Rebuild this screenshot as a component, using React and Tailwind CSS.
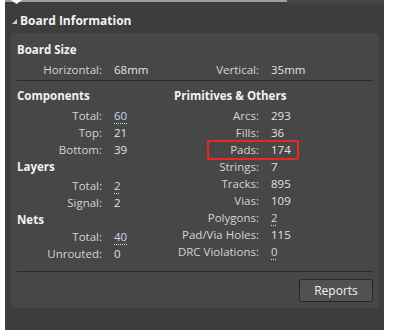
import React from 'react'

const font = { fontFamily: '"Open Sans", "Noto Sans", sans-serif' }

function Row({ label, value, link, children }) {
	return (
		<div className="relative flex h-[17px] items-center">
			<span className="w-[85px] shrink-0 text-right text-[#d4d4d4]">{label}</span>
			<span
				className={
					link
						? 'ml-[12px] text-[#cbd6e8] underline decoration-dotted decoration-[#cbd6e8] underline-offset-[3px]'
						: 'ml-[12px] text-[#e2e2e2]'
				}
			>
				{value}
			</span>
			{children}
		</div>
	)
}

function Heading({ children, className = '' }) {
	return <div className={'flex h-[17px] items-center font-bold text-[#f2f2f2] ' + className}>{children}</div>
}

export default function App() {
	return (
		<div className="flex h-[330px] w-[402px] overflow-hidden bg-white text-[11.5px] leading-none" style={font}>
			<div className="relative ml-[5px] flex h-full w-[379px] flex-col bg-[#3d3d3d]">
				{/* top strip */}
				<div className="flex h-[4px]">
					<div className="h-[2px] w-[282px] bg-[#9d9d9d]"></div>
					<div className="h-[4px] flex-1 bg-[#444444]"></div>
				</div>
				<svg className="absolute left-[6px] top-0" width="11" height="4" viewBox="0 0 11 4">
					<polygon points="0,0 11,0 5.5,4" fill="#ffffff" />
				</svg>

				{/* header */}
				<div className="flex h-[29px] items-center pl-[7px] pt-[5px]">
					<svg width="5" height="5" viewBox="0 0 5 5" className="mr-[3px] mt-[1px]">
						<polygon points="5,0 5,5 0,5" fill="#cfcfcf" />
					</svg>
					<span className="text-[12px] font-bold text-[#f2f2f2]">Board Information</span>
				</div>

				{/* card */}
				<div className="ml-[6px] w-[368px] rounded-[3px] bg-[#474747] px-[6px] pb-[6px] pt-[8px]">
					<Heading>Board Size</Heading>
					<div className="mt-[3px] grid grid-cols-[157px_1fr]">
						<Row label="Horizontal:" value="68mm" />
						<Row label="Vertical:" value="35mm" />
					</div>
					<div className="mt-[2px] h-px bg-[#2c2c2c]"></div>

					<div className="mt-[6px] grid grid-cols-[157px_1fr]">
						<div>
							<Heading>Components</Heading>
							<div className="mt-[3px]">
								<Row label="Total:" value="60" link />
								<Row label="Top:" value="21" />
								<Row label="Bottom:" value="39" />
							</div>
							<Heading>Layers</Heading>
							<div className="mt-[2px]">
								<Row label="Total:" value="2" link />
								<Row label="Signal:" value="2" />
							</div>
							<Heading>Nets</Heading>
							<Row label="Total:" value="40" link />
							<Row label="Unrouted:" value="0" />
						</div>
						<div>
							<Heading>Primitives &amp; Others</Heading>
							<div className="mt-[3px]">
								<Row label="Arcs:" value="293" />
								<Row label="Fills:" value="36" />
								<Row label="Pads:" value="174">
									<span className="absolute left-[33px] top-[-1px] h-[20px] w-[92px] rounded-[2px] border-2 border-[#ec2424]"></span>
								</Row>
								<Row label="Strings:" value="7" />
								<Row label="Tracks:" value="895" />
								<Row label="Vias:" value="109" />
								<Row label="Polygons:" value="2" link />
								<Row label="Pad/Via Holes:" value="115" />
								<Row label="DRC Violations:" value="0" link />
							</div>
						</div>
					</div>

					<div className="mt-[9px] h-px bg-[#2c2c2c]"></div>
					<div className="mt-[7px] flex justify-end">
						<button className="flex h-[23px] w-[74px] items-center justify-center rounded-[3px] border border-[#262626] bg-[#515151] text-[12px] text-[#f2f2f2]">
							Reports
						</button>
					</div>
				</div>
			</div>
		</div>
	)
}
